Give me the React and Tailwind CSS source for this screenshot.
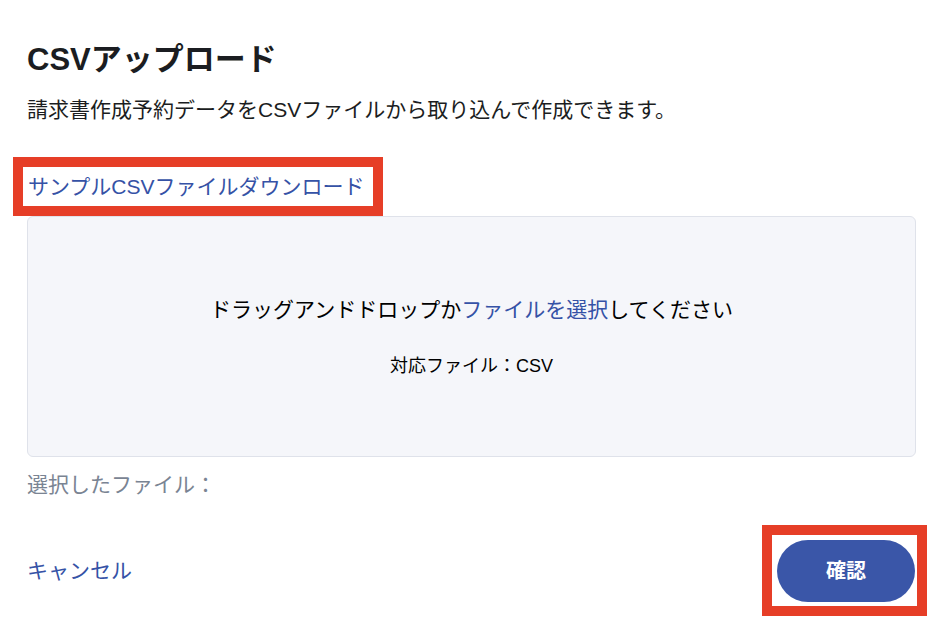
import React from 'react';

export default function App() {
  return (
    <div className="min-h-[632px] w-[944px] bg-white font-['Liberation_Sans','Noto_Sans_CJK_JP',sans-serif] text-[#1b1d21]">
      <div className="pl-[27px] pr-[28px] pt-[44px]">
        {/* Heading */}
        <h1 className="text-[31px] font-bold leading-[32px]">CSVアップロード</h1>
        <p className="mt-[20px] text-[21px] leading-[28px]">請求書作成予約データをCSVファイルから取り込んで作成できます。</p>

        {/* Sample download (highlighted) */}
        <div className="mt-[33px] -ml-[14px] inline-block border-[10px] border-[#e63e27] pl-[5px] pr-[8px]">
          <a href="#" className="block text-[21px] leading-[39px] text-[#3552a6]">サンプルCSVファイルダウンロード</a>
        </div>

        {/* Drop zone */}
        <div className="flex h-[241px] flex-col items-center justify-center rounded-[6px] border border-[#dfe2ea] bg-[#f5f6fa]">
          <p className="text-[21px] leading-[28px] text-black">
            ドラッグアンドドロップか<span className="text-[#3552a6]">ファイルを選択</span>してください
          </p>
          <p className="mt-[30px] text-[18px] leading-[24px] text-black">対応ファイル：CSV</p>
        </div>

        <p className="mt-[14px] text-[21px] leading-[28px] text-[#7a8493]">選択したファイル：</p>

        {/* Footer */}
        <div className="mt-[26px] flex items-center justify-between">
          <a href="#" className="text-[21px] leading-[28px] text-[#3552a6]">キャンセル</a>
          <div className="-mr-[11px] border-[10px] border-[#e63e27] pb-[4px] pl-[5px] pr-[2px] pt-[5px]">
            <button className="h-[62px] w-[138px] rounded-full bg-[#3a56a8] text-[20px] font-bold text-white">確認</button>
          </div>
        </div>
      </div>
    </div>
  );
}
